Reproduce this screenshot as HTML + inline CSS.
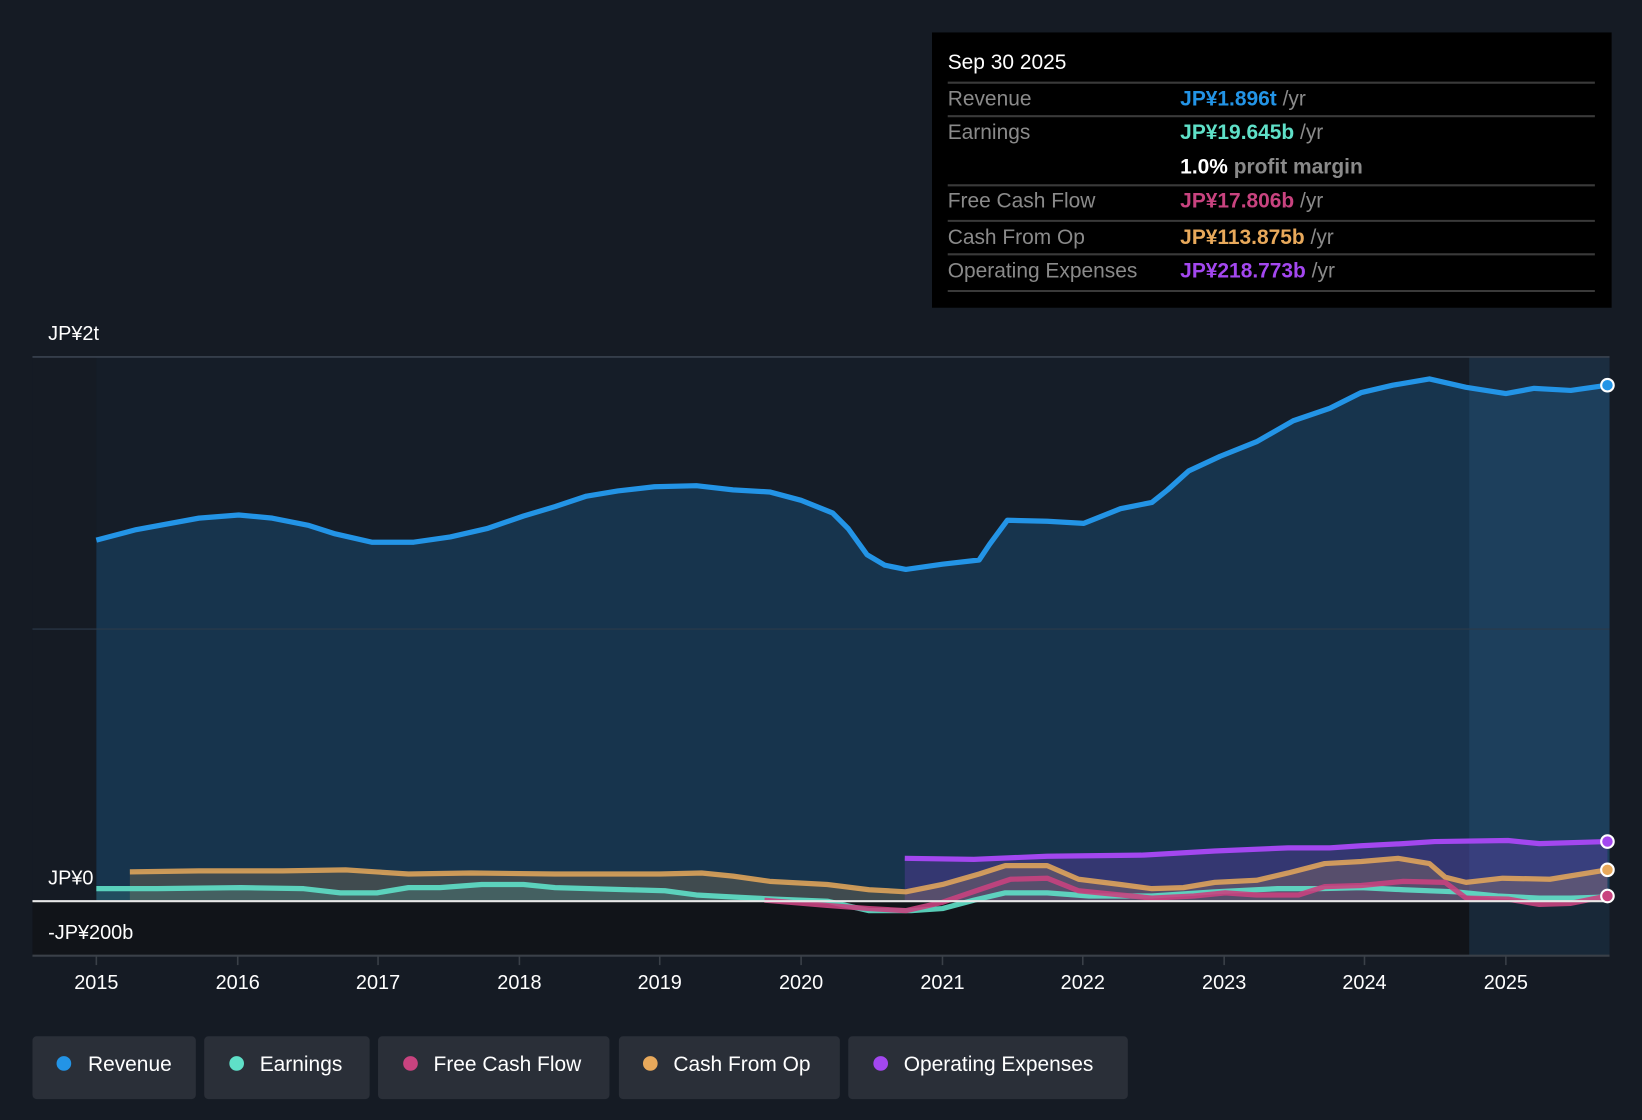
<!DOCTYPE html>
<html><head><meta charset="utf-8"><style>
html,body{margin:0;padding:0;background:#151b24;}
svg{display:block;font-family:"Liberation Sans",sans-serif;}
</style></head><body>
<svg width="1642" height="1120" viewBox="0 0 1568 1070" preserveAspectRatio="none">
<rect width="1568" height="1070" fill="#151b24"/>
<rect x="31" y="861" width="1506" height="52" fill="#111419"/>
<rect x="31" y="341" width="61" height="520" fill="#151b24"/>
<path d="M92,516 L130,506 190,495 228,492 260,495 295,502 320,510 355,518 395,518 430,513 465,505 500,493 530,484 560,474 590,469 625,465 665,464 700,468 735,470 765,478 795,490 810,505 828,530 845,540 865,544 900,539 935,535 945,520 962,497 1000,498 1035,500 1050,494 1070,486 1100,480 1115,468 1135,450 1165,436 1200,422 1235,402 1270,390 1300,375 1330,368 1365,362 1400,370 1438,376 1465,371 1500,373 1537,368 L1537,861 L92,861 Z" fill="#17344d"/>
<rect x="92" y="341" width="1311" height="520" fill="#1a3a5a" opacity="0.08"/>
<rect x="1403" y="341" width="134" height="572" fill="#2a5a80" opacity="0.3"/>
<line x1="31" y1="341" x2="1537" y2="341" stroke="#3a4350" stroke-width="1.5"/>
<line x1="31" y1="601" x2="1537" y2="601" stroke="#2c3a4a" stroke-width="1"/>
<path d="M864,820 L930,821 1000,818 1090,817 1160,813 1230,810 1270,810 1300,808 1340,806 1370,804 1440,803 1470,806 1535,804 L1535,861 L864,861 Z" fill="#8b3fe0" opacity="0.25"/>
<path d="M124,833 L190,832 270,832 330,831 360,833 390,835 450,834 530,835 630,835 670,834 700,837 735,842 790,845 830,850 865,852 900,845 935,835 960,827 1000,827 1030,840 1070,845 1100,849 1130,848 1160,843 1200,841 1230,834 1265,825 1300,823 1335,820 1365,825 1380,838 1400,843 1435,839 1480,840 1535,831 L1535,861 L124,861 Z" fill="#e8a95b" opacity="0.2"/>
<path d="M92,849 L150,849 230,848 290,849 325,853 360,853 390,848 420,848 460,845 500,845 530,848 600,850 635,851 665,855 700,857 740,859 790,861 L1535,861 L92,861 Z" fill="#5fe0c8" opacity="0.15"/>
<path d="M92,516 L130,506 190,495 228,492 260,495 295,502 320,510 355,518 395,518 430,513 465,505 500,493 530,484 560,474 590,469 625,465 665,464 700,468 735,470 765,478 795,490 810,505 828,530 845,540 865,544 900,539 935,535 945,520 962,497 1000,498 1035,500 1050,494 1070,486 1100,480 1115,468 1135,450 1165,436 1200,422 1235,402 1270,390 1300,375 1330,368 1365,362 1400,370 1438,376 1465,371 1500,373 1535,368" fill="none" stroke="#2394e6" stroke-width="5" stroke-linejoin="round"/>
<path d="M92,849 L150,849 230,848 290,849 325,853 360,853 390,848 420,848 460,845 500,845 530,848 600,850 635,851 665,855 700,857 740,859 790,861 830,870 870,870 900,868 930,860 960,853 1000,853 1040,856 1100,856 1160,852 1220,849 1260,849 1300,848 1340,850 1390,852 1430,856 1470,858 1500,858 1535,857" fill="none" stroke="#5fe0c8" stroke-width="5" stroke-linejoin="round" opacity="0.9"/>
<path d="M124,833 L190,832 270,832 330,831 360,833 390,835 450,834 530,835 630,835 670,834 700,837 735,842 790,845 830,850 865,852 900,845 935,835 960,827 1000,827 1030,840 1070,845 1100,849 1130,848 1160,843 1200,841 1230,834 1265,825 1300,823 1335,820 1365,825 1380,838 1400,843 1435,839 1480,840 1535,831" fill="none" stroke="#e8a95b" stroke-width="5" stroke-linejoin="round" opacity="0.85"/>
<path d="M730,860 L790,865 830,868 865,870 900,862 935,850 965,840 1000,839 1030,851 1070,855 1100,858 1140,856 1170,853 1200,855 1240,855 1265,847 1300,846 1340,842 1380,843 1400,858 1440,859 1470,864 1500,863 1535,856" fill="none" stroke="#c8437f" stroke-width="5" stroke-linejoin="round" opacity="0.9"/>
<path d="M864,820 L930,821 1000,818 1090,817 1160,813 1230,810 1270,810 1300,808 1340,806 1370,804 1440,803 1470,806 1535,804" fill="none" stroke="#a347ef" stroke-width="5" stroke-linejoin="round"/>
<line x1="31" y1="861" x2="1537" y2="861" stroke="#e8e8e8" stroke-width="2"/>
<circle cx="1535" cy="368" r="6" fill="#2394e6" stroke="#fff" stroke-width="2"/>
<circle cx="1535" cy="804" r="6" fill="#a347ef" stroke="#fff" stroke-width="2"/>
<circle cx="1535" cy="831" r="6" fill="#e8a95b" stroke="#fff" stroke-width="2"/>
<circle cx="1535" cy="856" r="6" fill="#c8437f" stroke="#fff" stroke-width="2"/>
<line x1="31" y1="913" x2="1537" y2="913" stroke="#3a4048" stroke-width="2"/>
<g stroke="#3a4048" stroke-width="1.5">
<line x1="92" y1="913" x2="92" y2="922"/><line x1="227" y1="913" x2="227" y2="922"/><line x1="361" y1="913" x2="361" y2="922"/><line x1="496" y1="913" x2="496" y2="922"/><line x1="630" y1="913" x2="630" y2="922"/><line x1="765" y1="913" x2="765" y2="922"/><line x1="900" y1="913" x2="900" y2="922"/><line x1="1034" y1="913" x2="1034" y2="922"/><line x1="1169" y1="913" x2="1169" y2="922"/><line x1="1303" y1="913" x2="1303" y2="922"/><line x1="1438" y1="913" x2="1438" y2="922"/>
</g>
<g fill="#fff" font-size="19" text-anchor="middle">
<text x="92" y="945">2015</text><text x="227" y="945">2016</text><text x="361" y="945">2017</text><text x="496" y="945">2018</text><text x="630" y="945">2019</text><text x="765" y="945">2020</text><text x="900" y="945">2021</text><text x="1034" y="945">2022</text><text x="1169" y="945">2023</text><text x="1303" y="945">2024</text><text x="1438" y="945">2025</text>
</g>
<g fill="#fff" font-size="19">
<text x="46" y="325">JP¥2t</text><text x="46" y="845">JP¥0</text><text x="46" y="897">-JP¥200b</text>
</g>
<rect x="890" y="31" width="649" height="263" fill="#000"/>
<g stroke="#3a3a3a" stroke-width="2">
<line x1="905" y1="79" x2="1523" y2="79"/><line x1="905" y1="111" x2="1523" y2="111"/><line x1="905" y1="177" x2="1523" y2="177"/><line x1="905" y1="211" x2="1523" y2="211"/><line x1="905" y1="243" x2="1523" y2="243"/><line x1="905" y1="278" x2="1523" y2="278"/>
</g>
<g font-size="20">
<text x="905" y="66" fill="#fff">Sep 30 2025</text>
<text x="905" y="101" fill="#8a8a8a">Revenue</text>
<text x="905" y="133" fill="#8a8a8a">Earnings</text>
<text x="905" y="198" fill="#8a8a8a">Free Cash Flow</text>
<text x="905" y="233" fill="#8a8a8a">Cash From Op</text>
<text x="905" y="265" fill="#8a8a8a">Operating Expenses</text>
<text x="1127" y="101" font-weight="bold"><tspan fill="#2394e6">JP¥1.896t</tspan><tspan fill="#8a8a8a" font-weight="normal"> /yr</tspan></text>
<text x="1127" y="133" font-weight="bold"><tspan fill="#5fe0c8">JP¥19.645b</tspan><tspan fill="#8a8a8a" font-weight="normal"> /yr</tspan></text>
<text x="1127" y="166" font-weight="bold"><tspan fill="#fff">1.0%</tspan><tspan fill="#8a8a8a"> profit margin</tspan></text>
<text x="1127" y="198" font-weight="bold"><tspan fill="#c8437f">JP¥17.806b</tspan><tspan fill="#8a8a8a" font-weight="normal"> /yr</tspan></text>
<text x="1127" y="233" font-weight="bold"><tspan fill="#e8a95b">JP¥113.875b</tspan><tspan fill="#8a8a8a" font-weight="normal"> /yr</tspan></text>
<text x="1127" y="265" font-weight="bold"><tspan fill="#a347ef">JP¥218.773b</tspan><tspan fill="#8a8a8a" font-weight="normal"> /yr</tspan></text>
</g>
<g fill="#2a2f38">
<rect x="31" y="990" width="156" height="60" rx="4"/><rect x="195" y="990" width="158" height="60" rx="4"/><rect x="361" y="990" width="221" height="60" rx="4"/><rect x="591" y="990" width="211" height="60" rx="4"/><rect x="810" y="990" width="267" height="60" rx="4"/>
</g>
<circle cx="61" cy="1016" r="7" fill="#2394e6"/><circle cx="226" cy="1016" r="7" fill="#5fe0c8"/><circle cx="392" cy="1016" r="7" fill="#c8437f"/><circle cx="621" cy="1016" r="7" fill="#e8a95b"/><circle cx="841" cy="1016" r="7" fill="#a347ef"/>
<g fill="#fff" font-size="20">
<text x="84" y="1023">Revenue</text><text x="248" y="1023">Earnings</text><text x="414" y="1023">Free Cash Flow</text><text x="643" y="1023">Cash From Op</text><text x="863" y="1023">Operating Expenses</text>
</g>
</svg>
</body></html>
